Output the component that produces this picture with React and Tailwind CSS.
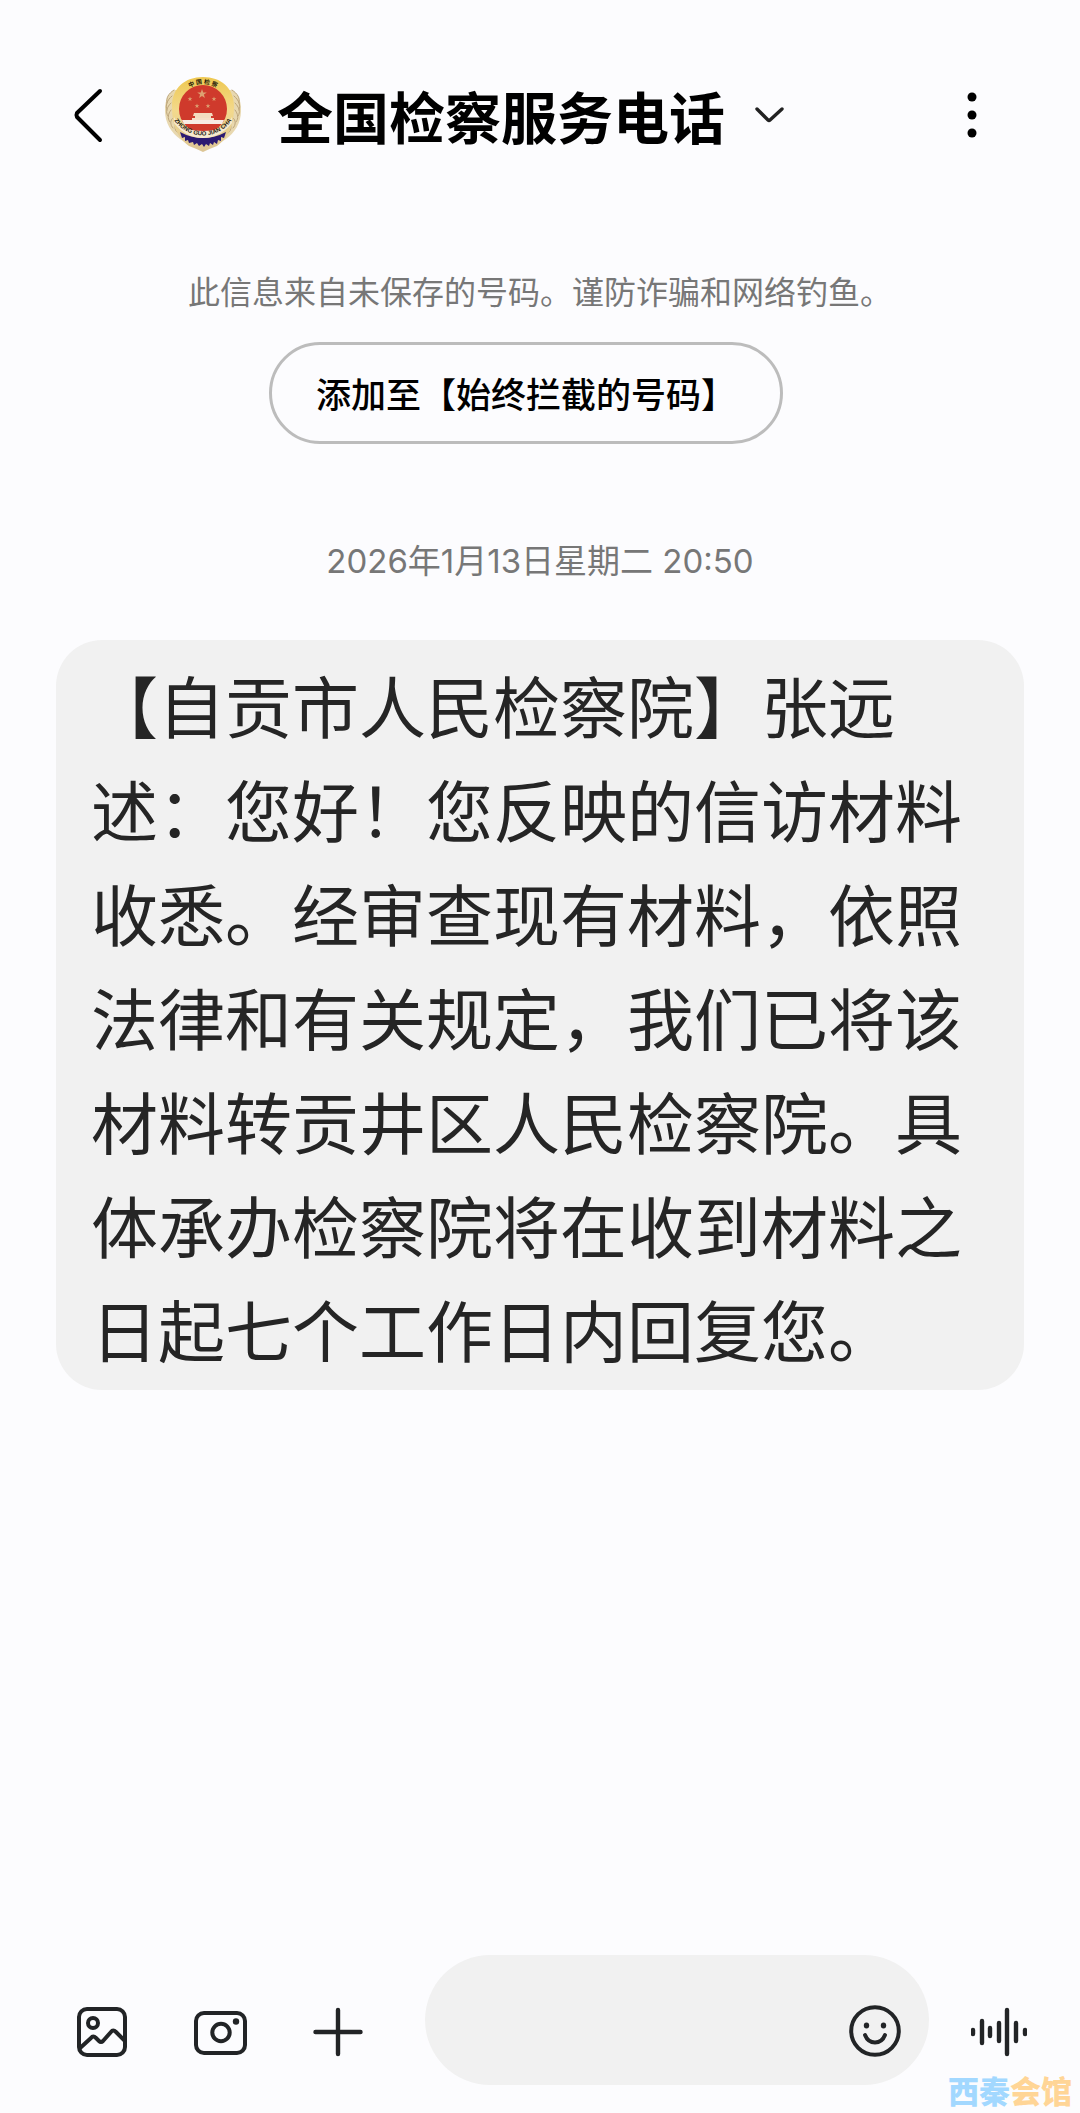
import React from 'react';

const MESSAGE =
  '【自贡市人民检察院】张远述：您好！您反映的信访材料收悉。经审查现有材料，依照法律和有关规定，我们已将该材料转贡井区人民检察院。具体承办检察院将在收到材料之日起七个工作日内回复您。';

// bars of the voice icon: [x, half height]
const VOICE_BARS = [
  [2, 2],
  [11, 11],
  [19, 4],
  [28, 9],
  [36, 22],
  [45, 9],
  [54, 2],
];

const STAR = 'M0 -5 L1.2 -1.6 L4.8 -1.5 L1.9 0.6 L2.9 4 L0 2 L-2.9 4 L-1.9 0.6 L-4.8 -1.5 L-1.2 -1.6 Z';

const Emblem = () => (
  <svg viewBox="0 0 76 78" className="h-[78px] w-[76px] shrink-0" role="img" aria-label="中国检察">
    <defs>
      <linearGradient id="gold" x1="0" y1="0" x2="0" y2="1">
        <stop offset="0" stopColor="#eec850" />
        <stop offset="0.45" stopColor="#f3d98c" />
        <stop offset="1" stopColor="#dcc596" />
      </linearGradient>
      <path id="arcTop" d="M16 20 A26 26 0 0 1 60 20" />
      <path id="arcBottom" d="M9 44 A35 35 0 0 0 67 44" />
    </defs>

    {/* wheat ears on both sides */}
    <path d="M9 14 C-1 20 -1 34 1 43 C4 55 13 63 22 67 L54 67 C63 63 72 55 75 43 C77 34 77 20 67 14 Z" fill="#e8d8b0" />
    <g fill="none" stroke="#bda57a" strokeWidth="1" strokeLinecap="round">
      <path d="M9 14 C3 18 1 22 2 27 M7 20 C2 24 0 30 2 34 M6 27 C2 31 0 36 3 40 M6 34 C3 38 2 42 5 46 M8 42 C5 44 5 49 8 52 M11 48 C9 51 10 55 13 57" />
      <path d="M67 14 C73 18 75 22 74 27 M69 20 C74 24 76 30 74 34 M70 27 C74 31 76 36 73 40 M70 34 C73 38 74 42 71 46 M68 42 C71 44 71 49 68 52 M65 48 C67 51 66 55 63 57" />
    </g>

    {/* shield */}
    <path d="M38 1 C56 1 69 12 69 30 C69 45 66 60 52 70 Q44 73 38 76 Q32 73 24 70 C10 60 7 45 7 30 C7 12 20 1 38 1 Z" fill="url(#gold)" />
    <circle cx="38" cy="33" r="24" fill="#cf3a2c" />

    <g fill="#dda071">
      <path d={STAR} transform="translate(37 18)" />
      <path d={STAR} transform="translate(25 23) scale(0.5)" />
      <path d={STAR} transform="translate(49 23) scale(0.5)" />
      <path d={STAR} transform="translate(32 30) scale(0.5)" />
      <path d={STAR} transform="translate(43 30) scale(0.5)" />
    </g>

    {/* gate tower */}
    <path d="M29 37 H47 L48 40 H28 Z M30 40 H46 V43 H30 Z" fill="#f3dcc0" />
    <path d="M27 42 H49 V46 H27 Z" fill="#f6dfc8" />
    <path d="M17 44 H59 L57 48 H19 Z" fill="#f7ece4" />

    {/* ribbon and gear */}
    <path d="M15 56 Q26 62 38 62 Q50 62 61 56 L59 62 L56 61 L56 65 L53 64 L52 68 L49 66 L48 69 L45 67 L44 70 L41 68 L39 71 L37 68 L34 70 L32 67 L29 69 L28 66 L24 67 L23 64 L20 65 L20 61 L17 62 Z" fill="#2b1a72" />
    <path d="M9 41 Q14 50 20 52 Q28 55 38 55 Q48 55 56 52 Q62 50 67 41 L67 47 Q55 62 38 62 Q21 62 9 47 Z" fill="#f6ead0" />

    <text fontSize="6" fontWeight="700" fill="#1c1608" textAnchor="middle" fontFamily="'Noto Sans CJK SC', sans-serif">
      <textPath href="#arcTop" startOffset="50%">中 国 检 察</textPath>
    </text>
    <text fontSize="6" fontWeight="700" fill="#1f1a14" textAnchor="middle" fontFamily="'Liberation Sans', sans-serif">
      <textPath href="#arcBottom" startOffset="50%">ZHONG GUO JIAN CHA</textPath>
    </text>
  </svg>
);

const Header = () => (
  <header className="flex items-center pt-[76px] pr-20 pl-[60px]">
    <button type="button" aria-label="返回" className="flex h-14 w-14 items-center justify-center">
      <svg viewBox="0 0 32 56" className="h-14 w-8" fill="none" stroke="#000" strokeWidth="4" strokeLinecap="round" strokeLinejoin="round">
        <path d="M28 4 L5 26 Q4 28 5 30 L28 53" />
      </svg>
    </button>
    <button type="button" className="ml-[49px] flex items-center">
      <Emblem />
      <h1 className="ml-9 text-[56px] leading-[78px] font-bold text-black">全国检察服务电话</h1>
      <svg viewBox="0 0 32 20" className="ml-7 h-5 w-8" fill="none" stroke="#222" strokeWidth="3.4" strokeLinecap="round" strokeLinejoin="round">
        <path d="M4 4 L15 15 Q16 16 17 15 L29 4" />
      </svg>
    </button>
    <button type="button" aria-label="更多选项" className="ml-auto flex h-14 w-14 items-center justify-center">
      <svg viewBox="0 0 12 48" className="h-12 w-3" fill="#000">
        <circle cx="6" cy="6" r="4.5" />
        <circle cx="6" cy="24" r="4.5" />
        <circle cx="6" cy="42" r="4.5" />
      </svg>
    </button>
  </header>
);

const Composer = () => (
  <footer className="mt-auto flex items-end pr-[53px] pb-7 pl-[74px] text-[#222426]">
    <div className="mb-7 flex gap-[62px]">
      <button type="button" aria-label="图片">
        <svg viewBox="0 0 56 50" className="h-[50px] w-14" fill="none" stroke="currentColor" strokeWidth="4" strokeLinejoin="round">
          <rect x="5" y="2" width="46" height="46" rx="8" />
          <circle cx="19" cy="16" r="5" />
          <path d="M5 42 L17 31 Q19 28 22 31 L25 34 Q27 36 29 34 L37 25 Q39 22 42 25 L51 34" />
        </svg>
      </button>
      <button type="button" aria-label="相机">
        <svg viewBox="0 0 56 50" className="h-[50px] w-14" fill="none" stroke="currentColor" strokeWidth="4">
          <rect x="4" y="6" width="49" height="40" rx="8" />
          <circle cx="29" cy="25.5" r="8.7" />
          <circle cx="44" cy="14.5" r="3.2" fill="currentColor" stroke="none" />
        </svg>
      </button>
      <button type="button" aria-label="更多">
        <svg viewBox="0 0 56 50" className="h-[50px] w-14" fill="none" stroke="currentColor" strokeWidth="4.4" strokeLinecap="round">
          <path d="M5.5 25 H50.5 M28 3 V47" />
        </svg>
      </button>
    </div>

    <div className="ml-[59px] flex h-[130px] min-w-0 flex-1 items-end rounded-full bg-[#f1f1f1] pr-7 pl-12">
      <input type="text" aria-label="输入信息" className="h-full min-w-0 flex-1 bg-transparent text-[40px] outline-none" />
      <button type="button" aria-label="表情" className="mb-7">
        <svg viewBox="0 0 52 52" className="h-[52px] w-[52px]" fill="none" stroke="currentColor" strokeWidth="4" strokeLinecap="round">
          <circle cx="26" cy="26" r="23.8" />
          <ellipse cx="17.5" cy="20.5" rx="2.7" ry="3" fill="currentColor" stroke="none" />
          <ellipse cx="34.5" cy="20.5" rx="2.7" ry="3" fill="currentColor" stroke="none" />
          <path d="M16 30 Q19 37.5 26 37.5 Q33 37.5 36 30" />
        </svg>
      </button>
    </div>

    <button type="button" aria-label="语音" className="mb-7 ml-[42px]">
      <svg viewBox="0 0 56 50" className="h-[50px] w-14" stroke="currentColor" strokeWidth="4.4" strokeLinecap="round">
        {VOICE_BARS.map(([x, h]) => (
          <path key={x} d={`M${x} ${25 - h} V${25 + h}`} />
        ))}
      </svg>
    </button>
  </footer>
);

const App = () => {
  return (
    <div lang="zh-CN" className="relative flex min-h-screen flex-col bg-[#fcfcfe] font-['Noto_Sans_CJK_SC',sans-serif]">
      <Header />

      <main className="flex flex-col">
        <p className="mt-28 text-center text-[32px] leading-[48px] text-[#777]">
          此信息来自未保存的号码。谨防诈骗和网络钓鱼。
        </p>
        <div className="mt-7 flex justify-center pr-7">
          <button type="button" className="h-[102px] rounded-full border-3 border-[#bcbcbc] px-11 text-[35px] font-medium text-black">
            添加至【始终拦截的号码】
          </button>
        </div>
        <p className="mt-[93px] text-center font-['Inter','Noto_Sans_CJK_SC',sans-serif] text-[33px] leading-[48px] text-[#777]">
          2026年1月13日星期二 20:50
        </p>
        <div className="mx-14 mt-[55px] rounded-[46px] bg-[#f1f1f1] pt-3 pr-8 pb-[10px] pl-[35px]">
          <p className="text-[67px] leading-[104px] text-[#252525]">{MESSAGE}</p>
        </div>
      </main>

      <Composer />

      {/* site watermark */}
      <div className="absolute right-2 bottom-1 text-[31px] leading-[38px] font-black">
        <span className="text-[#a2d8ff]">西秦</span>
        <span className="text-[#ffd596]">会馆</span>
      </div>
    </div>
  );
};

export default App;
